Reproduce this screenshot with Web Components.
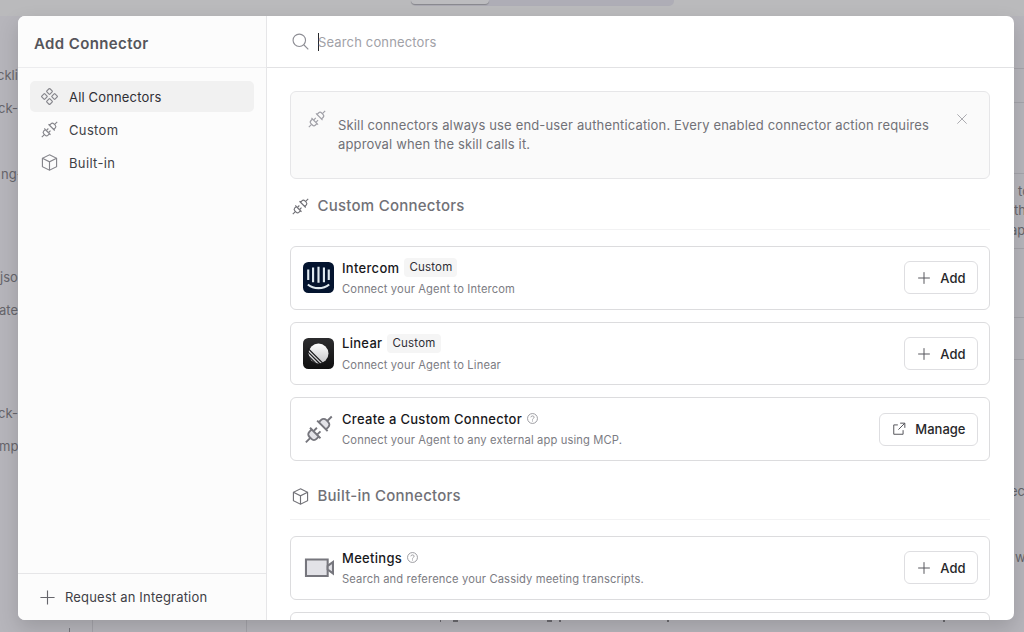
<!DOCTYPE html>
<html lang="en">
<head>
<meta charset="utf-8">
<title>Add Connector</title>
<style>
    html, body { margin: 0; height: 100%; overflow: hidden; }
    body {
        position: relative;
        background: #b6b5bb;
        font: 13px/20px Inter, "Open Sans", sans-serif;
        color: #3f3f46;
    }
</style>
</head>
<body>
<page-backdrop></page-backdrop>
<connector-dialog>
    <span slot="title">Add Connector</span>
    <nav-item slot="nav" icon="grid" active style="--ls:.16px">All Connectors</nav-item>
    <nav-item slot="nav" icon="plug">Custom</nav-item>
    <nav-item slot="nav" icon="box">Built-in</nav-item>
    <span slot="request">Request an Integration</span>
    <info-note>Skill connectors always use end-user authentication. Every enabled connector action requires approval when the skill calls it.</info-note>
    <connector-section icon="plug" heading="Custom Connectors">
        <connector-card name="Intercom" tag="Custom" logo="intercom" action="Add">Connect your Agent to Intercom</connector-card>
        <connector-card name="Linear" tag="Custom" logo="linear" action="Add">Connect your Agent to Linear</connector-card>
        <connector-card name="Create a Custom Connector" help logo="plugDuo" action="Manage">Connect your Agent to any external app using MCP.</connector-card>
    </connector-section>
    <connector-section icon="box" heading="Built-in Connectors">
        <connector-card name="Meetings" help logo="camera" action="Add">Search and reference your Cassidy meeting transcripts.</connector-card>
        <connector-card></connector-card>
    </connector-section>
</connector-dialog>

<script>
'use strict';

const plug = `
    <path d="M18.9 5.1 22.9 1.1M1.1 22.9l4-4"/>
    <path d="M4.6 10.6 13.4 19.4M6 12l-2 2a3 3 0 0 0 0 4.2l1.8 1.8a3 3 0 0 0 4.2 0L12 18z"/>
    <path d="M7.8 13.2 10.4 10.6M10.8 16.2l2.6-2.6"/>
    <path d="M10.6 4.6 19.4 13.4M12 6l2-2a3 3 0 0 1 4.2 0l1.8 1.8a3 3 0 0 1 0 4.2L18 12z"/>`;

const ICONS = {
    grid: `
        <rect x="8.9" y="1.7" width="6.2" height="6.2" rx=".9" transform="rotate(45 12 4.8)"/>
        <rect x="8.9" y="16.1" width="6.2" height="6.2" rx=".9" transform="rotate(45 12 19.2)"/>
        <rect x="1.7" y="8.9" width="6.2" height="6.2" rx=".9" transform="rotate(45 4.8 12)"/>
        <rect x="16.1" y="8.9" width="6.2" height="6.2" rx=".9" transform="rotate(45 19.2 12)"/>`,
    plug,
    plugDuo: `<g fill="#e2e2e7" transform="translate(1.2 .9) scale(.92)">${plug}</g>`,
    box: `<path d="M12 1.2 22 6v12l-10 4.8L2 18V6z"/><path d="M2 6l10 5 10-5M12 11v11.8"/>`,
    plus: `<path d="M12 2v20M2 12h20"/>`,
    close: `<path d="M4 4l16 16M20 4 4 20"/>`,
    search: `<circle cx="10.3" cy="10.3" r="8.8"/><path d="M16.6 16.6 23 23"/>`,
    help: `<circle cx="12" cy="12" r="10.8"/><path d="M8.4 9.4c.3-2 1.7-3 3.6-3s3.5 1.1 3.5 3c0 2.4-3.5 2.4-3.5 5"/><path d="M12 16.2v2.4"/>`,
    external: `<path d="M10 5H3v16h16v-7M14 2h8v8M22 2 11 13"/>`,
    camera: `<path d="M2.3 5.8h16.8v12.8H2.3z" fill="#e2e2e7"/><path d="M19.1 10.8 23.2 7.8v8.8l-4.1-3z" fill="#e2e2e7"/>`,
    intercom: `
        <rect width="32" height="32" rx="5.5" fill="#04142f" stroke="none"/>
        <path d="M5.4 7.8v10.8M10.4 5.6v15.2M16 5v16.3M21.6 5.6v15.2M26.6 7.8v10.8" stroke="#dfe9f0" stroke-width="2.2"/>
        <path d="M5 23.2c6 5 16 5 22 0" stroke="#dfe9f0" stroke-width="2.2"/>`,
    linear: `
        <defs>
            <linearGradient id="tile" x2="0" y2="1"><stop stop-color="#2c2c2e"/><stop offset="1" stop-color="#0f0f10"/></linearGradient>
            <linearGradient id="disc" x2="0" y2="1"><stop stop-color="#fff"/><stop offset="1" stop-color="#c5c5c7"/></linearGradient>
        </defs>
        <rect width="32" height="32" rx="5.5" fill="url(#tile)" stroke="none"/>
        <circle cx="16" cy="16" r="10.3" fill="url(#disc)" stroke="none"/>
        <path d="M5 10.6 21.4 27M4.4 13.6 18.4 27.6M4.4 17.4 15 28" stroke="#19191b" stroke-width="1.2"/>`
};

class UiIcon extends HTMLElement {
    connectedCallback()
    {
        const name = this.getAttribute('name');
        const box = name === 'intercom' || name === 'linear' ? 32 : 24;
        this.attachShadow({ mode: 'open' }).innerHTML = `
        <style>
        :host { display: block; flex: none; width: var(--size, 18px); height: var(--size, 18px); }
        svg {
            display: block; width: 100%; height: 100%; overflow: visible;
            fill: none; stroke: currentColor; stroke-width: var(--stroke, 1.6);
        }
        </style>
        <svg viewBox="0 0 ${box} ${box}">${ICONS[name]}</svg>`;
    }
}

class NavItem extends HTMLElement {
    connectedCallback()
    {
        this.attachShadow({ mode: 'open' }).innerHTML = `
        <style>
        :host {
            display: flex; align-items: center; gap: 11px;
            box-sizing: border-box; height: 31px; padding: 0 11px;
            border-radius: 5px; letter-spacing: var(--ls, .35px);
        }
        :host([active]) { background: #f1f1f1; color: #2f2f35; }
        ui-icon { --size: 17px; color: #85858b; }
        </style>
        <ui-icon name="${this.getAttribute('icon')}"></ui-icon><slot></slot>`;
    }
}

class InfoNote extends HTMLElement {
    connectedCallback()
    {
        this.attachShadow({ mode: 'open' }).innerHTML = `
        <style>
        :host {
            display: flex; align-items: flex-start;
            box-sizing: border-box; height: 87.5px; margin-bottom: .5px; padding: 18px 20px 0 17px;
            border: 1px solid #e6e6e8; border-radius: 6px;
            background: #fafafa; color: #717177;
            line-height: 19.6px; letter-spacing: .155px;
        }
        .plug { --size: 18px; color: #a1a1a8; }
        .close { --size: 14px; color: #a6a6ab; margin: 2px 0 0; }
        p { margin: 5.5px 0 0 12px; flex: 1; padding-right: 20px; }
        </style>
        <ui-icon class="plug" name="plug"></ui-icon>
        <p><slot></slot></p>
        <ui-icon class="close" name="close"></ui-icon>`;
    }
}

class ConnectorSection extends HTMLElement {
    connectedCallback()
    {
        this.attachShadow({ mode: 'open' }).innerHTML = `
        <style>
        :host { display: block; }
        :host([icon="box"]) { margin-top: 8px; }
        h2 {
            display: flex; align-items: center; gap: 9px; margin: 0 0 16px;
            box-sizing: border-box; height: 51px; padding: 4px 0 0 1.5px; border-bottom: 1px solid #f2f2f3;
            font-size: 15px; font-weight: 500; color: #717177; letter-spacing: .25px;
        }
        h2 ui-icon { --size: 17px; }
        .list { display: flex; flex-direction: column; gap: 12px; }
        </style>
        <h2><ui-icon name="${this.getAttribute('icon')}"></ui-icon><span>${this.getAttribute('heading')}</span></h2>
        <div class="list"><slot></slot></div>`;
    }
}

class ConnectorCard extends HTMLElement {
    connectedCallback()
    {
        const name = this.getAttribute('name');
        const action = this.getAttribute('action');
        const tag = this.getAttribute('tag');
        this.attachShadow({ mode: 'open' }).innerHTML = `
        <style>
        :host {
            display: flex; align-items: center; flex: none;
            box-sizing: border-box; height: 63.7px; padding: 0 11px 0 12px;
            border: 1px solid #dcdcde; border-radius: 6px; background: #fff;
        }
        .logo { --size: 31px; --stroke: 1.6; color: #76767d; }
        .text { flex: 1; margin-left: 8px; padding-top: 1px; }
        .title { display: flex; align-items: center; height: 20px; color: #18181b; font-weight: 500; letter-spacing: .3px; }
        .tag {
            margin-left: 5px; padding: 0 5px; border-radius: 4px;
            background: #f5f5f5; font-size: 11.5px; line-height: 19px; font-weight: 400; color: #2f2f35;
            letter-spacing: .2px;
        }
        .help { --size: 11px; --stroke: 1.8; margin-left: 5px; color: #8a8a90; }
        .desc { margin-top: 2.5px; font-size: 11.2px; line-height: 19px; letter-spacing: .13px; color: #7c7c83; }
        button {
            display: flex; align-items: center; gap: 9px;
            box-sizing: border-box; height: 33px; padding: 0 11.5px 0 12.5px;
            border: 1px solid #dedee1; border-radius: 6px; background: #fff;
            font: 500 13px/20px Inter, "Open Sans", sans-serif; color: #27272a;
        }
        button ui-icon { --size: 14px; --stroke: 1.7; color: #55555b; }
        </style>
        ${name ? `
        <ui-icon class="logo" name="${this.getAttribute('logo')}"></ui-icon>
        <div class="text">
            <div class="title">${name}${tag ? `<span class="tag">${tag}</span>` : ''}${this.hasAttribute('help') ? '<ui-icon class="help" name="help"></ui-icon>' : ''}</div>
            <div class="desc"><slot></slot></div>
        </div>
        <button><ui-icon name="${action === 'Manage' ? 'external' : 'plus'}"></ui-icon>${action}</button>` : ''}`;
    }
}

class ConnectorDialog extends HTMLElement {
    connectedCallback()
    {
        this.attachShadow({ mode: 'open' }).innerHTML = `
        <style>
        :host {
            position: absolute; left: 18px; top: 16px; width: 995.5px; height: 604px;
            display: flex; overflow: hidden; border-radius: 7px;
            background: #fff; box-shadow: 0 8px 20px rgba(0, 0, 0, .15);
        }
        aside {
            display: flex; flex-direction: column; flex: none;
            box-sizing: border-box; width: 249px;
            border-right: 1px solid #e6e6e8; background: #fcfcfc;
        }
        header { box-sizing: border-box; height: 52px; flex: none; border-bottom: 1px solid #ececee; }
        aside header { padding: 18px 16px 0; font-size: 15px; font-weight: 600; letter-spacing: .38px; color: #55555b; }
        nav { flex: 1; display: flex; flex-direction: column; gap: 2px; padding: 13px 12px; }
        footer {
            display: flex; align-items: center; gap: 9px;
            box-sizing: border-box; height: 47px; padding: 0 21px; border-top: 1px solid #e6e6e8;
            letter-spacing: .18px;
        }
        footer ui-icon { --size: 17px; color: #66666c; }
        main { flex: 1; min-width: 0; display: flex; flex-direction: column; }
        main header {
            display: flex; align-items: center; padding: 0 25px; gap: 9px;
            border-color: #e2e2e4; color: #a1a1a7; letter-spacing: .15px;
        }
        main header ui-icon { --size: 17px; color: #8e8e95; }
        .field { display: flex; align-items: center; }
        .caret { width: 1px; height: 18px; margin-right: -1px; background: #27272a; }
        .body { flex: 1; min-height: 0; overflow: hidden; padding: 23px 23.5px 0 23px; }
        </style>
        <aside>
            <header><slot name="title"></slot></header>
            <nav><slot name="nav"></slot></nav>
            <footer><ui-icon name="plus"></ui-icon><slot name="request"></slot></footer>
        </aside>
        <main>
            <header><ui-icon name="search"></ui-icon><div class="field"><span class="caret"></span><span>Search connectors</span></div></header>
            <div class="body"><slot></slot></div>
        </main>`;
    }
}

// Dimmed page that shows round the edges of the dialog
class PageBackdrop extends HTMLElement {
    connectedCallback()
    {
        const left = [[75, 'ckli', -3], [108, 'ck-', -2], [174, 'ng-', 1], [277, 'jso', 0], [310, 'ate', -1], [413, 'ck-', -2], [446, 'mp', -1]];
        const right = [[191, 'to', 5], [210, 'th', 1], [230, 'ap', -3], [491, 'ec', -3], [557, 'w', 2]];
        const lines = [68, 102, 173, 248, 317, 359];
        // descenders of the line of text under the lower edge: x, width
        const tails = [[440, 1], [453, 5], [547, 5], [559, 2], [667, 2], [943, 2]];
        this.attachShadow({ mode: 'open' }).innerHTML = `
        <style>
        :host { display: block; height: 100%; color: #66656b; }
        .top { display: flex; box-sizing: border-box; height: 16px; padding-left: 411px; background: #bababc; }
        .tabs { width: 263px; height: 6px; border-radius: 0 0 5px 5px; background: #aeadb6; }
        .tab { width: 78px; height: 4px; border-radius: 0 0 5px 5px; background: #bcbcbf; box-shadow: 0 1px 1px #85858b; }
        span { position: absolute; white-space: nowrap; }
        i { position: absolute; background: #a5a4aa; }
        .tail { top: 620px; height: 2px; background: #6c6b70; }
        </style>
        <div class="top"><div class="tabs"><div class="tab"></div></div></div>
        ${left.map(([y, t, x]) => `<span style="left:${x}px;top:${y - 10}px">${t}</span>`).join('')}
        ${right.map(([y, t, x]) => `<span style="left:${1013 + x}px;top:${y - 10}px">${t}</span>`).join('')}
        ${lines.map(y => `<i style="left:1013px;top:${y}px;width:11px;height:1px"></i>`).join('')}
        ${tails.map(([x, w]) => `<i class="tail" style="left:${x}px;width:${w}px"></i>`).join('')}
        <i style="left:69px;top:628px;width:1px;height:4px;background:#77767c"></i>
        <i style="left:92px;top:620px;width:1px;height:12px"></i>
        <i style="left:246px;top:620px;width:1px;height:12px"></i>`;
    }
}

customElements.define('ui-icon', UiIcon);
customElements.define('nav-item', NavItem);
customElements.define('info-note', InfoNote);
customElements.define('connector-section', ConnectorSection);
customElements.define('connector-card', ConnectorCard);
customElements.define('page-backdrop', PageBackdrop);
customElements.define('connector-dialog', ConnectorDialog);
</script>
</body>
</html>
